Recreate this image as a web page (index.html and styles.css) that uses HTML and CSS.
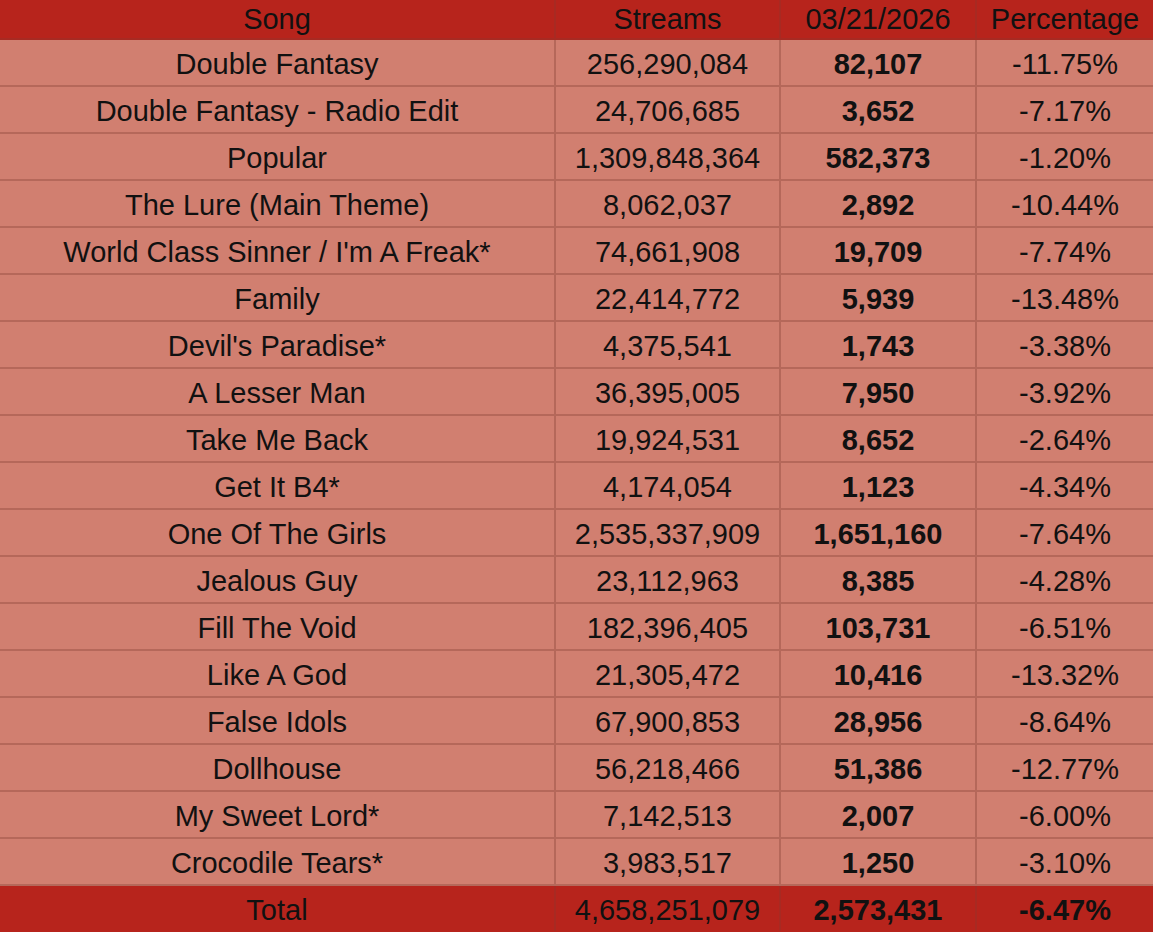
FILE: index.html
```html
<!DOCTYPE html>
<html>
<head>
<meta charset="utf-8">
<link rel="stylesheet" href="styles.css">
</head>
<body>
<table class="sheet">
<colgroup><col class="c1"><col class="c2"><col class="c3"><col class="c4"></colgroup>
<thead>
<tr class="head"><th>Song</th><th>Streams</th><th>03/21/2026</th><th>Percentage</th></tr>
</thead>
<tbody>
<tr><td>Double Fantasy</td><td>256,290,084</td><td class="b">82,107</td><td>-11.75%</td></tr>
<tr><td>Double Fantasy - Radio Edit</td><td>24,706,685</td><td class="b">3,652</td><td>-7.17%</td></tr>
<tr><td>Popular</td><td>1,309,848,364</td><td class="b">582,373</td><td>-1.20%</td></tr>
<tr><td>The Lure (Main Theme)</td><td>8,062,037</td><td class="b">2,892</td><td>-10.44%</td></tr>
<tr><td>World Class Sinner / I'm A Freak*</td><td>74,661,908</td><td class="b">19,709</td><td>-7.74%</td></tr>
<tr><td>Family</td><td>22,414,772</td><td class="b">5,939</td><td>-13.48%</td></tr>
<tr><td>Devil's Paradise*</td><td>4,375,541</td><td class="b">1,743</td><td>-3.38%</td></tr>
<tr><td>A Lesser Man</td><td>36,395,005</td><td class="b">7,950</td><td>-3.92%</td></tr>
<tr><td>Take Me Back</td><td>19,924,531</td><td class="b">8,652</td><td>-2.64%</td></tr>
<tr><td>Get It B4*</td><td>4,174,054</td><td class="b">1,123</td><td>-4.34%</td></tr>
<tr><td>One Of The Girls</td><td>2,535,337,909</td><td class="b">1,651,160</td><td>-7.64%</td></tr>
<tr><td>Jealous Guy</td><td>23,112,963</td><td class="b">8,385</td><td>-4.28%</td></tr>
<tr><td>Fill The Void</td><td>182,396,405</td><td class="b">103,731</td><td>-6.51%</td></tr>
<tr><td>Like A God</td><td>21,305,472</td><td class="b">10,416</td><td>-13.32%</td></tr>
<tr><td>False Idols</td><td>67,900,853</td><td class="b">28,956</td><td>-8.64%</td></tr>
<tr><td>Dollhouse</td><td>56,218,466</td><td class="b">51,386</td><td>-12.77%</td></tr>
<tr><td>My Sweet Lord*</td><td>7,142,513</td><td class="b">2,007</td><td>-6.00%</td></tr>
<tr><td>Crocodile Tears*</td><td>3,983,517</td><td class="b">1,250</td><td>-3.10%</td></tr>
</tbody>
<tfoot>
<tr class="total"><td>Total</td><td>4,658,251,079</td><td class="b">2,573,431</td><td class="b">-6.47%</td></tr>
</tfoot>
</table>
</body>
</html>
```
FILE: styles.css
```css
html, body {
  margin: 0;
  padding: 0;
  background: #b7241c;
}
.sheet {
  width: 1153px;
  border-collapse: collapse;
  table-layout: fixed;
  font-family: "Liberation Sans", Arial, sans-serif;
  font-size: 29px;
  color: #111;
}
.c1 { width: 555px; }
.c2 { width: 225px; }
.c3 { width: 196px; }
.c4 { width: 177px; }
.sheet th, .sheet td {
  text-align: center;
  padding: 0;
  white-space: nowrap;
  border: 2px solid #b5685a;
  line-height: 1;
}
.sheet tr > :first-child { border-left: none; }
.sheet tr > :last-child { border-right: none; }
.head th {
  background: #b7241c;
  font-weight: normal;
  height: 38px;
  border-top: none;
  border-color: #a82a22;
}
.sheet tbody td {
  background: #d17f70;
  height: 41px;
  padding-top: 4px;
}
.total td {
  background: #b7241c;
  height: 42px;
  padding-top: 3px;
  border-bottom: none;
  border-color: #a82a22;
  border-top-color: #b5685a;
}
.b { font-weight: bold; }
```
